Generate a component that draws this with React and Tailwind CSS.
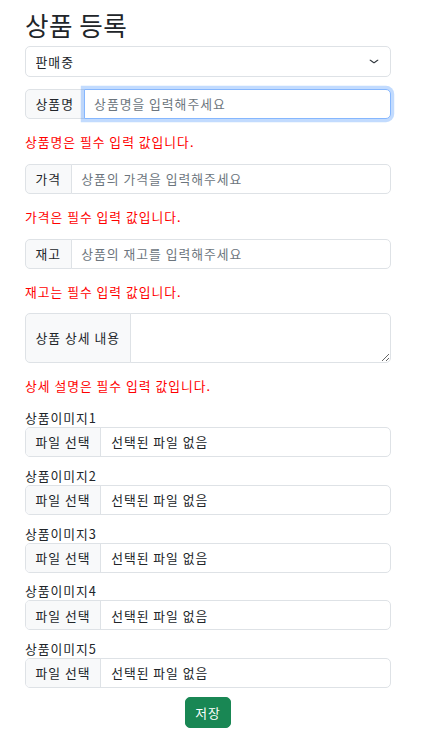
import React from "react";

const font = { fontFamily: '"Noto Sans CJK KR", "Noto Sans", sans-serif' };

function ErrorText({ children, className = "" }) {
  return (
    <p className={"text-[12.8px] leading-[19px] text-[#ff0000] " + className}>{children}</p>
  );
}

function TextGroup({ label, placeholder, focused = false, className = "" }) {
  return (
    <div className={"flex h-[30px] w-full " + className}>
      <span className="flex items-center whitespace-nowrap rounded-l-[5px] border border-[#dee2e6] bg-[#f8f9fa] px-[9.6px] text-[12.8px] text-[#212529]">
        {label}
      </span>
      <input
        type="text"
        placeholder={placeholder}
        className={
          "relative -ml-px min-w-0 flex-1 rounded-r-[5px] border bg-white px-[9.6px] text-[12.8px] tracking-[1px] text-[#212529] outline-none placeholder:text-[#6c757d] " +
          (focused
            ? "z-10 border-[#86b7fe] shadow-[0_0_0_3.2px_rgba(13,110,253,0.25)]"
            : "border-[#dee2e6]")
        }
      />
    </div>
  );
}

function FileGroup({ label, className = "" }) {
  return (
    <div className={className}>
      <div className="text-[12.8px] leading-[19px] text-[#212529]">{label}</div>
      <label className="flex h-[30px] w-full cursor-pointer items-center overflow-hidden rounded-[5px] border border-[#dee2e6] bg-white text-[12.8px] text-[#212529]">
        <span className="flex h-full items-center border-r border-[#dee2e6] bg-[#f8f9fa] px-[9.6px] whitespace-nowrap">
          파일 선택
        </span>
        <span className="pl-[10px]">선택된 파일 없음</span>
        <input type="file" className="hidden" />
      </label>
    </div>
  );
}

export default function App() {
  return (
    <div className="min-h-[754px] bg-white" style={font}>
      <div className="ml-[25px] w-[366px] pt-[9px]">
        <h2 className="mb-[6px] text-[25.6px] font-normal leading-[31px] tracking-[0.5px] text-[#212529]">
          상품 등록
        </h2>
        <div className="tracking-[1px]">
          <div className="relative h-[31px] w-full">
            <select className="h-full w-full appearance-none rounded-[5px] border border-[#dee2e6] bg-white pl-[9.6px] pr-[30px] text-[12.8px] tracking-[1px] text-[#212529] outline-none">
              <option>판매중</option>
              <option>판매완료</option>
            </select>
            <svg
              className="pointer-events-none absolute right-[12px] top-[12px]"
              width="10"
              height="7"
              viewBox="0 0 16 16"
              preserveAspectRatio="none"
            >
              <path
                d="m2 5 6 6 6-6"
                fill="none"
                stroke="#343a40"
                strokeWidth="2.2"
                strokeLinecap="round"
                strokeLinejoin="round"
              />
            </svg>
          </div>

          <TextGroup className="mt-[12px]" label="상품명" placeholder="상품명을 입력해주세요" focused />
          <ErrorText className="mt-[13px] mb-[13px]">상품명은 필수 입력 값입니다.</ErrorText>

          <TextGroup label="가격" placeholder="상품의 가격을 입력해주세요" />
          <ErrorText className="mt-[13px] mb-[13px]">가격은 필수 입력 값입니다.</ErrorText>

          <TextGroup label="재고" placeholder="상품의 재고를 입력해주세요" />
          <ErrorText className="mt-[13px] mb-[12px]">재고는 필수 입력 값입니다.</ErrorText>

          <div className="flex h-[50px] w-full">
            <span className="flex items-center whitespace-nowrap rounded-l-[5px] border border-[#dee2e6] bg-[#f8f9fa] px-[9.6px] text-[12.8px] text-[#212529]">
              상품 상세 내용
            </span>
            <textarea className="-ml-px min-w-0 flex-1 resize-y rounded-r-[5px] border border-[#dee2e6] bg-white px-[9.6px] py-[4.8px] text-[12.8px] text-[#212529] outline-none" />
          </div>
          <ErrorText className="mt-[13px] mb-[13px]">상세 설명은 필수 입력 값입니다.</ErrorText>

          <FileGroup label="상품이미지1" />
          <FileGroup className="mt-[8.75px]" label="상품이미지2" />
          <FileGroup className="mt-[8.75px]" label="상품이미지3" />
          <FileGroup className="mt-[8.75px]" label="상품이미지4" />
          <FileGroup className="mt-[8.75px]" label="상품이미지5" />

          <div className="mt-[9px] flex justify-center">
            <button
              type="button"
              className="h-[31px] rounded-[5px] border border-[#198754] bg-[#198754] px-[9.6px] text-[12.8px] tracking-[1px] text-white"
            >
              저장
            </button>
          </div>
        </div>
      </div>
    </div>
  );
}
